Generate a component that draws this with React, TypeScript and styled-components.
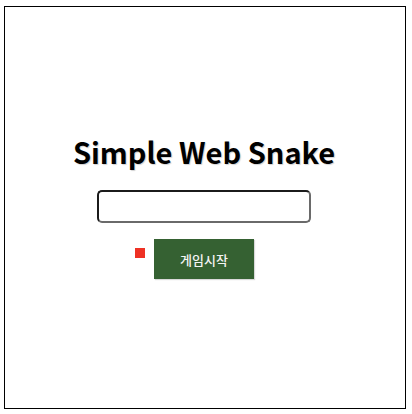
import styled, { createGlobalStyle } from 'styled-components';

const GlobalStyle = createGlobalStyle`
  html, body {
    margin: 0;
    padding: 0;
    background: #ffffff;
  }
  body {
    font-family: "Noto Sans CJK KR", "Noto Sans", sans-serif;
  }
`;

const Frame = styled.div`
  box-sizing: border-box;
  margin: 6px 0 0 4px;
  width: 402px;
  height: 403px;
  border: 1px solid #000;
  display: flex;
  flex-direction: column;
  align-items: center;
  padding: 124px 2px 0 0;
`;

const Title = styled.h1`
  margin: 0;
  font-family: "Noto Sans CJK KR", "Noto Sans", sans-serif;
  font-size: 29px;
  line-height: 40px;
  font-weight: 700;
  color: #000;
  text-shadow: 1px 1px 1px rgba(0, 0, 0, 0.18);
`;

const NameInput = styled.input`
  box-sizing: border-box;
  margin-top: 19px;
  width: 214px;
  height: 33px;
  border-radius: 5px;
  border-width: 2px;
  border-style: solid;
  border-color: #1b1b1b #6a6a6a #6a6a6a #1b1b1b;
  background: #fff;
  outline: none;
  font: inherit;
  font-size: 14px;
  padding: 0 8px;
`;

const ControlRow = styled.div`
  margin-top: 16px;
  width: 100%;
  display: grid;
  grid-template-columns: 1fr auto 1fr;
`;

const SnakeCell = styled.div<{ $color: string }>`
  justify-self: end;
  align-self: start;
  margin: 9px 9px 0 0;
  width: 10px;
  height: 10px;
  background: ${(p) => p.$color};
`;

const StartButton = styled.button`
  width: 100px;
  height: 40px;
  border: none;
  background: #356132;
  color: #f4f4f4;
  font-family: "Noto Sans CJK KR", sans-serif;
  font-size: 13px;
  font-weight: 500;
  cursor: pointer;
  box-shadow: 1px 1px 1px rgba(0, 0, 0, 0.15);
`;

export default function App() {
  return (
    <>
      <GlobalStyle />
      <Frame>
        <Title>Simple Web Snake</Title>
        <NameInput type="text" />
        <ControlRow>
          <SnakeCell $color="#ee3124" />
          <StartButton>게임시작</StartButton>
        </ControlRow>
      </Frame>
    </>
  );
}
